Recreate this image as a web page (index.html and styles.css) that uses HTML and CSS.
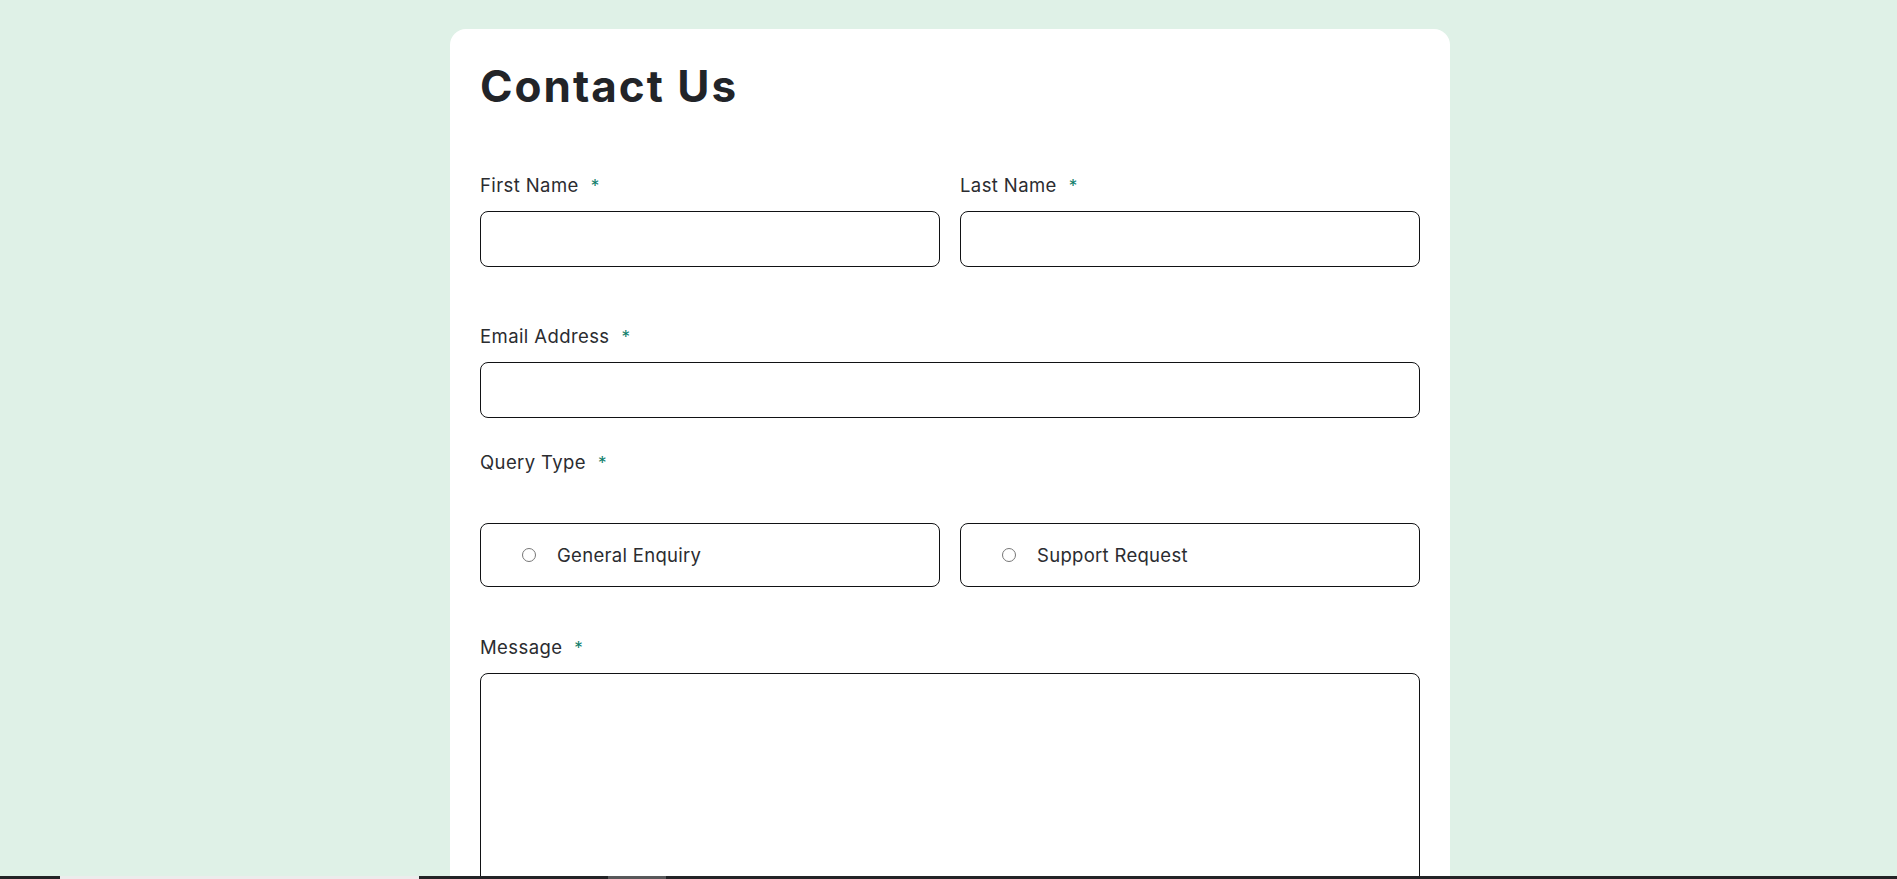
FILE: index.html
```html
<!DOCTYPE html>
<html lang="en">
<head>
<meta charset="utf-8">
<title>Contact Us</title>
<link rel="stylesheet" href="styles.css">
</head>
<body>
<main class="page">
  <form class="card">
    <h1 class="title">Contact Us</h1>
    <div class="row row-names">
      <div class="field">
        <label class="label" for="fname">First Name<span class="req">*</span></label>
        <input class="input" id="fname" type="text">
      </div>
      <div class="field">
        <label class="label" for="lname">Last Name<span class="req">*</span></label>
        <input class="input" id="lname" type="text">
      </div>
    </div>
    <div class="field field-email">
      <label class="label" for="email">Email Address<span class="req">*</span></label>
      <input class="input" id="email" type="email">
    </div>
    <div class="field field-query">
      <span class="label">Query Type<span class="req">*</span></span>
      <div class="row radios">
        <label class="radio-box"><input class="radio" type="radio" name="q"><span>General Enquiry</span></label>
        <label class="radio-box"><input class="radio" type="radio" name="q"><span>Support Request</span></label>
      </div>
    </div>
    <div class="field field-message">
      <label class="label" for="msg">Message<span class="req">*</span></label>
      <textarea class="textarea" id="msg"></textarea>
    </div>
  </form>
</main>
<div class="taskbar">
  <span class="tb tb-dark tb-a"></span>
  <span class="tb tb-light"></span>
  <span class="tb tb-dark tb-b"></span>
  <span class="tb tb-grey"></span>
  <span class="tb tb-dark tb-rest"></span>
</div>
</body>
</html>
```
FILE: styles.css
```css
html {
  overflow: hidden;
}
body {
  margin: 0;
  background: #dff1e7;
  font-family: Inter, "Noto Sans", sans-serif;
  color: #2b2c30;
}
.page {
  padding: 29px 0 0 3px;
}
.card {
  box-sizing: border-box;
  width: 1000px;
  margin: 0 auto;
  padding: 30px 30px 40px;
  background: #fff;
  border-radius: 16px;
}
.title {
  margin: 0;
  font-size: 44px;
  line-height: 54px;
  font-weight: 700;
  letter-spacing: 2px;
  color: #222428;
}
.row {
  display: grid;
  grid-template-columns: 1fr 1fr;
  gap: 20px;
}
.row-names {
  margin-top: 60px;
}
.field {
  display: flex;
  flex-direction: column;
}
.label {
  display: block;
  font-size: 18.5px;
  line-height: 24px;
  letter-spacing: 0.4px;
  margin-bottom: 13px;
}
.req {
  color: #0c7d69;
  margin-left: 12px;
  font-size: 17px;
}
.input {
  box-sizing: border-box;
  height: 56px;
  border: 1px solid #111214;
  border-radius: 8px;
  background: #fff;
  font: inherit;
  margin: 0;
}
.field-email {
  margin-top: 57px;
}
.field-query {
  margin-top: 32px;
}
.field-query .label {
  margin-bottom: 48px;
}
.radio-box {
  box-sizing: border-box;
  height: 64px;
  display: flex;
  align-items: center;
  gap: 21px;
  padding-left: 41px;
  border: 1px solid #111214;
  border-radius: 8px;
  font-size: 18.5px;
  letter-spacing: 0.3px;
}
.radio {
  appearance: none;
  box-sizing: border-box;
  width: 14px;
  height: 14px;
  margin: 0;
  border: 1px solid #777;
  border-radius: 50%;
  background: #fff;
}
.field-message {
  margin-top: 48px;
}
.textarea {
  box-sizing: border-box;
  height: 260px;
  border: 1px solid #111214;
  border-radius: 8px;
  resize: none;
  font: inherit;
  margin: 0;
}
.taskbar {
  position: fixed;
  left: 0;
  right: 0;
  bottom: 0;
  height: 3px;
  display: flex;
}
.tb {
  display: block;
  height: 100%;
}
.tb-dark {
  background: #232326;
}
.tb-a {
  width: 60px;
}
.tb-light {
  width: 359px;
  background: #ececec;
}
.tb-b {
  width: 189px;
}
.tb-grey {
  width: 58px;
  background: #58585a;
}
.tb-rest {
  flex: 1;
}
```
